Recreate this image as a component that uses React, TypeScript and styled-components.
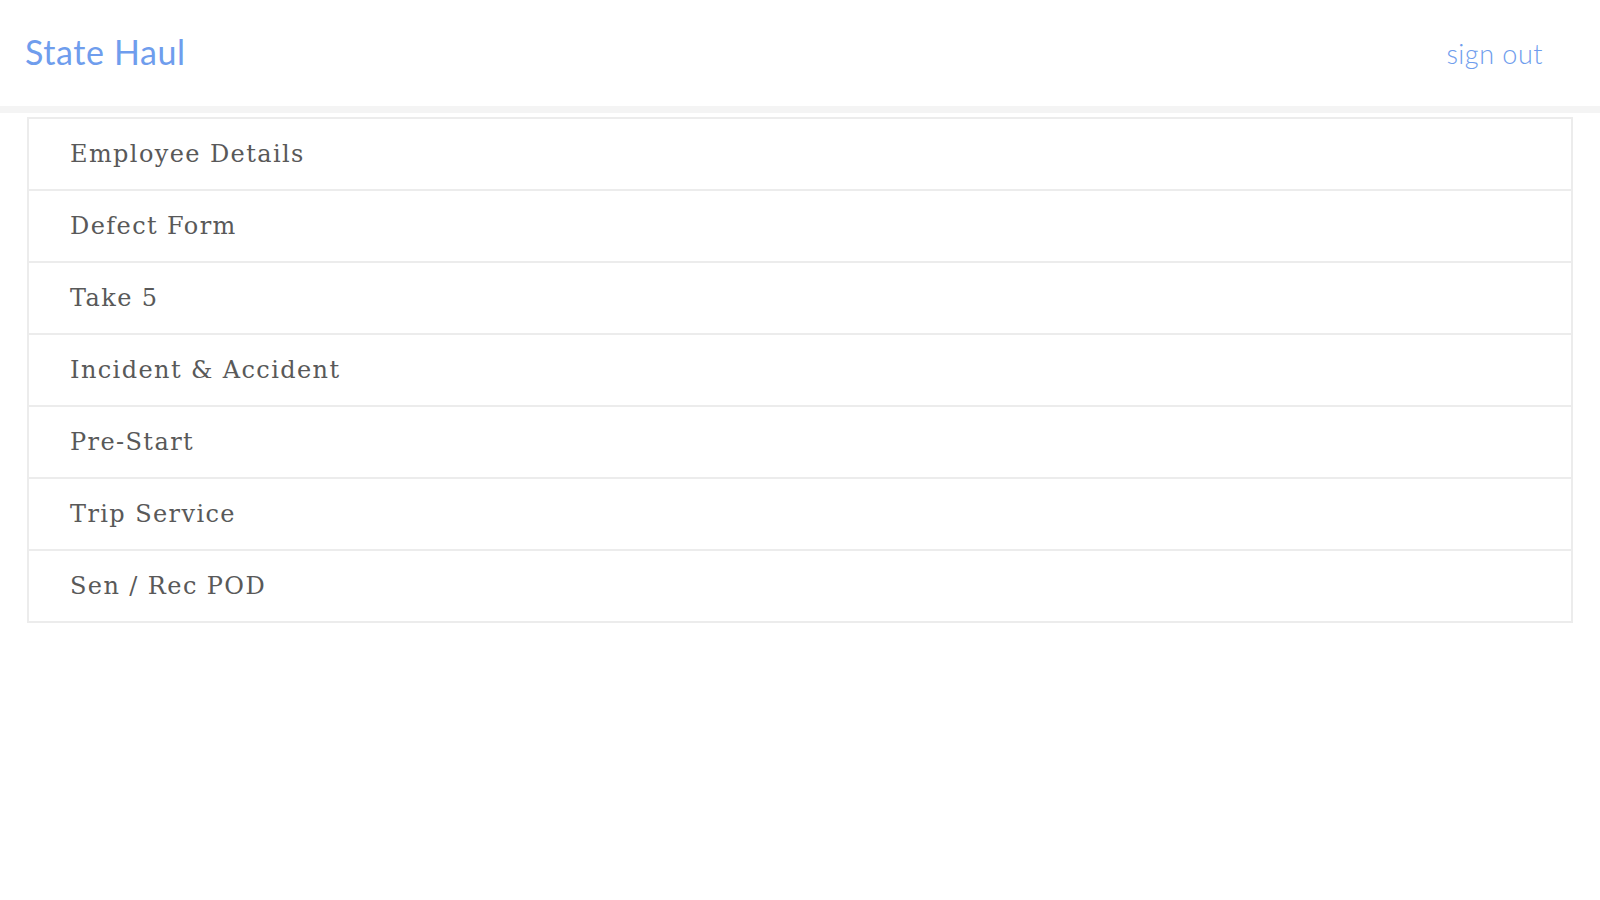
import styled, { createGlobalStyle } from 'styled-components';

const GlobalStyle = createGlobalStyle`
  html, body {
    margin: 0;
    padding: 0;
    background: #ffffff;
  }
  * {
    box-sizing: border-box;
  }
`;

const Header = styled.header`
  display: flex;
  align-items: center;
  justify-content: space-between;
  height: 113px;
  padding: 0 57px 0 25px;
  background: #ffffff;
  border-bottom: 7px solid #f4f4f4;
`;

const Brand = styled.a`
  font-family: Lato, 'Open Sans', sans-serif;
  font-size: 34px;
  font-weight: 400;
  letter-spacing: 0.6px;
  color: #6f9ded;
  text-decoration: none;
  margin-top: -4px;
`;

const SignOut = styled.a`
  font-family: Lato, 'Open Sans', sans-serif;
  font-size: 27px;
  font-weight: 300;
  letter-spacing: 0.5px;
  color: #6f9ded;
  text-decoration: none;
`;

const Menu = styled.ul`
  list-style: none;
  margin: 4px 27px 0 27px;
  padding: 0;
  border: 2px solid #ececec;
  border-bottom: none;
`;

const MenuItem = styled.li`
  display: flex;
  align-items: center;
  height: 72px;
  padding: 0 0 0 41px;
  border-bottom: 2px solid #ececec;
  font-family: 'DejaVu Serif', serif;
  font-size: 24px;
  letter-spacing: 1.4px;
  color: #595959;
  cursor: pointer;
`;

const items = [
  'Employee Details',
  'Defect Form',
  'Take 5',
  'Incident & Accident',
  'Pre-Start',
  'Trip Service',
  'Sen / Rec POD',
];

export default function App() {
  return (
    <>
      <GlobalStyle />
      <Header>
        <Brand>State Haul</Brand>
        <SignOut>sign out</SignOut>
      </Header>
      <Menu>
        {items.map((item) => (
          <MenuItem key={item}>{item}</MenuItem>
        ))}
      </Menu>
    </>
  );
}
